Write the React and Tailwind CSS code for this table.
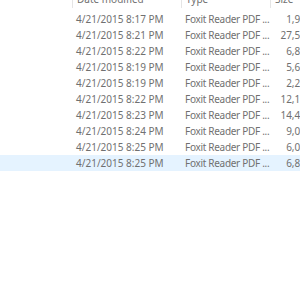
const rows = [
    { date: '4/21/2015 8:17 PM', size: '1,954 KB' },
    { date: '4/21/2015 8:21 PM', size: '27,546 KB' },
    { date: '4/21/2015 8:22 PM', size: '6,833 KB' },
    { date: '4/21/2015 8:19 PM', size: '5,602 KB' },
    { date: '4/21/2015 8:19 PM', size: '2,245 KB' },
    { date: '4/21/2015 8:22 PM', size: '12,134 KB' },
    { date: '4/21/2015 8:23 PM', size: '14,432 KB' },
    { date: '4/21/2015 8:24 PM', size: '9,012 KB' },
    { date: '4/21/2015 8:25 PM', size: '6,056 KB' },
    { date: '4/21/2015 8:25 PM', size: '6,823 KB', selected: true },
];

function App() {

    return (
        <div className="w-[300px] h-[300px] overflow-hidden bg-white text-[10px] text-[#707070]" style={{ fontFamily: '"Segoe UI", "Noto Sans", sans-serif' }}>
            <div className="-mt-[6px] w-[340px]">
                <div className="flex h-[14px] items-center">
                    <div className="w-[72px]" />
                    <div className="w-[109px] border-l border-[#e5e5e5] pl-[4px] h-full leading-[11px]">Date modified</div>
                    <div className="w-[89px] border-l border-[#e5e5e5] pl-[4px] h-full leading-[11px]">Type</div>
                    <div className="flex-1 border-l border-[#e5e5e5] pl-[4px] h-full leading-[11px]">Size</div>
                </div>
                <div className="mt-[3px]">
                    {rows.map((r, i) => (
                        <div key={i} className={'flex h-[16px] items-center ' + (r.selected ? 'bg-[#e5f3ff]' : '')}>
                            <div className="w-[76px]" />
                            <div className="w-[109px] whitespace-nowrap">{r.date}</div>
                            <div className="w-[85px] whitespace-nowrap tracking-[-0.3px]">Foxit Reader PDF ...</div>
                            <div className="w-[57px] text-right whitespace-nowrap">{r.size}</div>
                        </div>
                    ))}
                </div>
            </div>
        </div>
    );
}

export default App;
